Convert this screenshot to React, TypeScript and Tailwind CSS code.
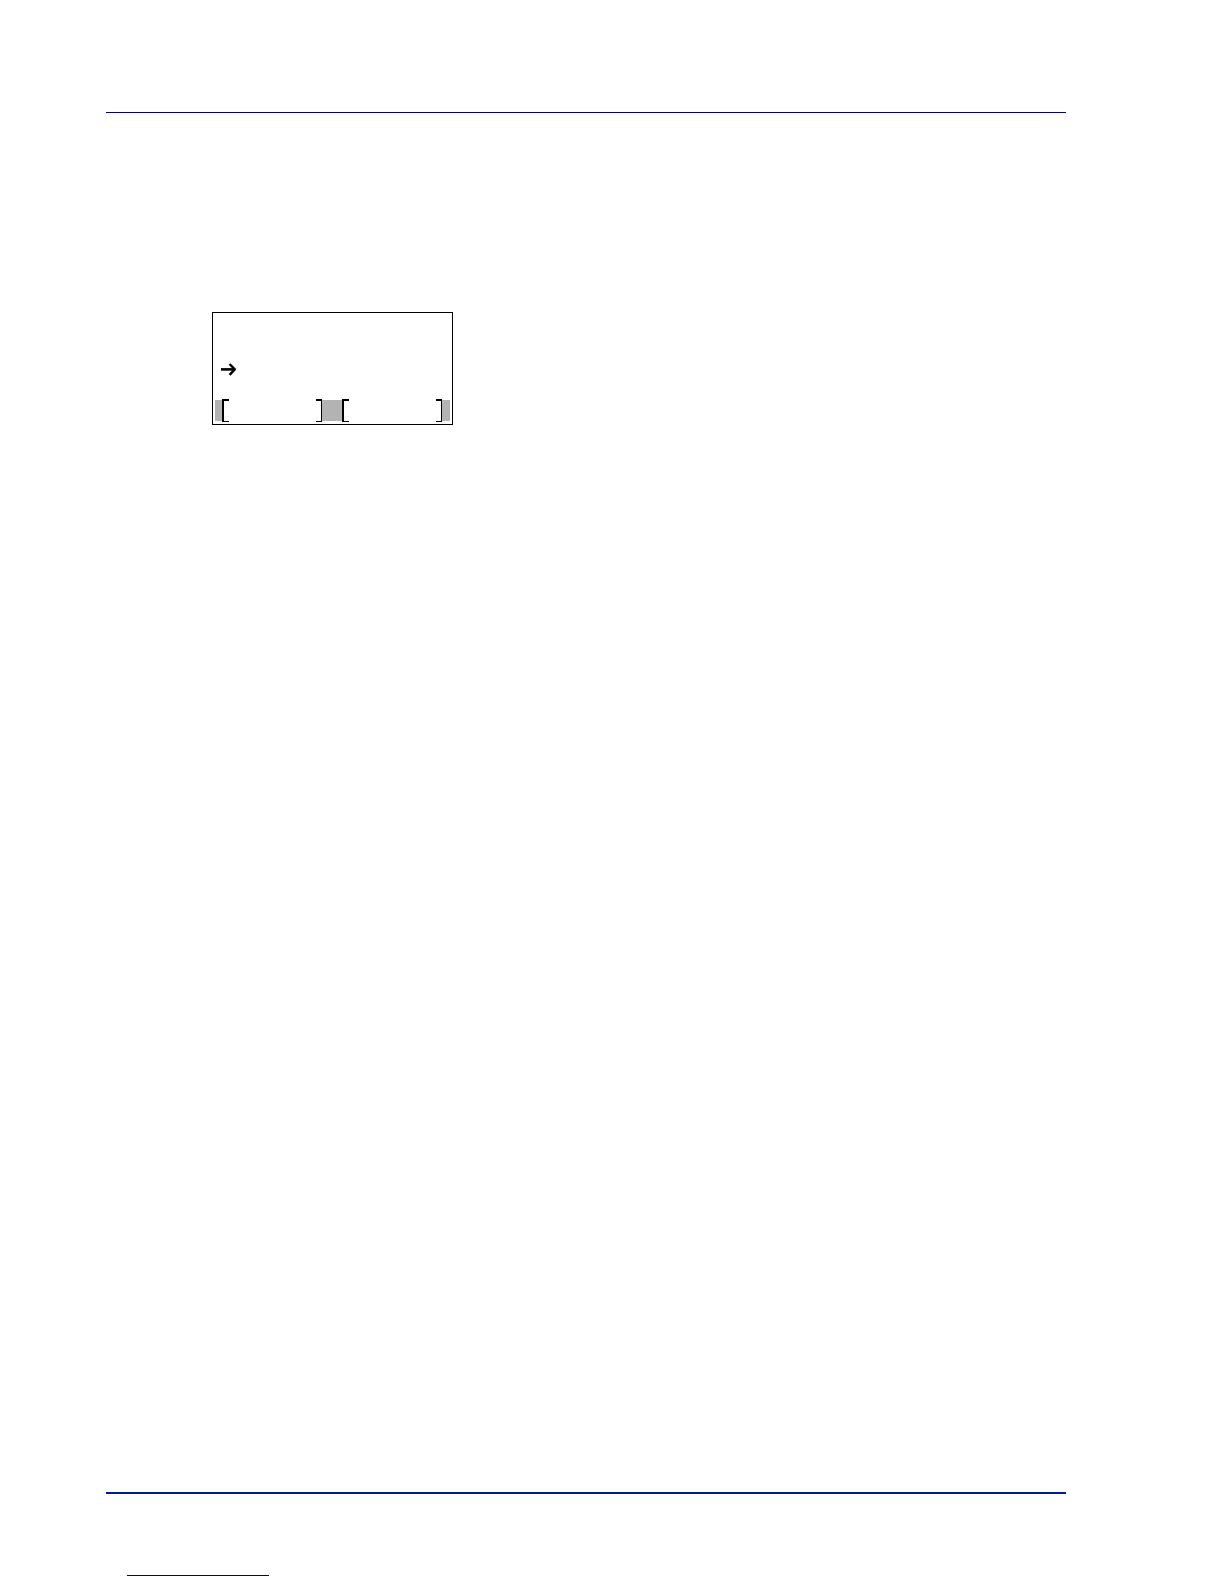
const softKeys = ['Left select', 'Right select'];

/** Selection arrow in front of the current menu line. */
const MenuArrow = () => (
  <svg width="16" height="14" viewBox="0 0 16 14" fill="none" stroke="#000" aria-hidden="true">
    <path d="M0 7.4H14" strokeWidth="2.6" />
    <path d="M8.6 2L13.8 7.4L8.6 12.8" strokeWidth="2.4" strokeLinejoin="round" />
  </svg>
);

/** One soft key of the message display, framed by square brackets. */
const SoftKey = ({ label }: { label: string }) => (
  <button type="button" aria-label={label} className="flex w-[100px] justify-between bg-white">
    <span className="h-full w-[7px] border-t-2 border-b border-l-2 border-black" />
    <span className="h-full w-1.5 border-t-2 border-r border-b border-black" />
  </button>
);

const MessageDisplay = () => (
  <section
    aria-label="Message display"
    className="mt-[199px] ml-[106px] flex w-[241px] flex-col border border-black px-0.5 pb-0.5"
  >
    <div className="flex pt-[49px] pl-1.5">
      <MenuArrow />
    </div>
    <div className="mt-[23px] flex h-[23px]">
      <span className="my-px w-[7px] bg-[#b3b3b3]" />
      <SoftKey label={softKeys[0]} />
      <span className="my-px w-5 bg-[#b3b3b3]" />
      <SoftKey label={softKeys[1]} />
      <span className="my-px w-2 bg-[#b3b3b3]" />
    </div>
  </section>
);

const App = () => (
  <div className="flex min-h-screen flex-col bg-white pt-28 pr-[158px] pb-2 pl-[106px] font-['Liberation_Sans',sans-serif]">
    <header className="h-px bg-[#000080]" />
    <main>
      <MessageDisplay />
    </main>
    <footer className="mt-auto">
      <div className="h-0.5 bg-[#001a96]" />
      <div className="mt-[81px] ml-[21px] h-px w-[142px] bg-[#000080]" />
    </footer>
  </div>
);

export default App;
